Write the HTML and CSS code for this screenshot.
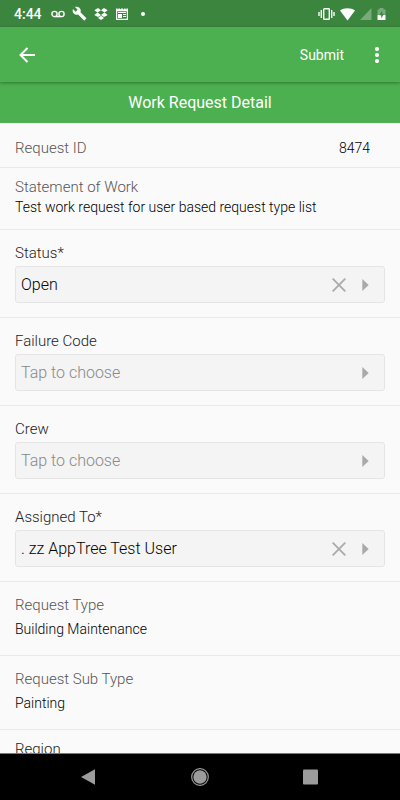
FILE: index.html
```html
<!DOCTYPE html>
<html lang="en">
<head>
<meta charset="utf-8">
<meta name="viewport" content="width=device-width, initial-scale=1">
<title>Work Request Detail</title>
<link rel="stylesheet" href="styles.css">
</head>
<body>
<div class="status-bar">
  <span class="clock">4:44</span>
  <div class="notices">
    <svg width="14" height="14" viewBox="0 0 14 14" fill="none" stroke="#fff" stroke-width="1.4"><circle cx="3.5" cy="7" r="2.6"/><circle cx="10.5" cy="7" r="2.6"/><path d="M3.5 9.6h7"/></svg>
    <svg width="15" height="15" viewBox="0 0 24 24" fill="#fff"><path d="M22.7 19l-9.1-9.1c.9-2.3.4-5-1.5-6.9-2-2-5-2.4-7.4-1.3L9 6 6 9 1.6 4.7C.4 7.1.9 10.1 2.9 12.1c1.9 1.9 4.6 2.4 6.9 1.5l9.1 9.1c.4.4 1 .4 1.400 0l2.300-2.300c.5-.4.5-1.100.1-1.400z"/></svg>
    <svg width="14" height="14" viewBox="0 0 14 14" fill="#fff"><path d="M4 1 7 3.300 3.500 5.600.3 3.200zM10 1l3.700 2.200-3.200 2.400L7 3.300zM.3 7.900l3.200-2.300L7 7.900l-3 2.200zM10.500 5.600l3.200 2.300L10 10.100 7 7.900zM4 10.900 7 8.700l3 2.200-3 2.200z"/></svg>
    <svg width="14" height="14" viewBox="0 0 14 14"><path fill="#fff" fill-rule="evenodd" d="M1 1.500H13V13H1zM2.200 4.200v7.600h9.600V4.200z"/><path fill="#3b853e" d="M2.500 1h1v1.200h-1zM5 1h1v1.200H5zM8 1h1v1.200H8zM10.500 1h1v1.200h-1z"/><path fill="#fff" d="M3 5h8v1H3zM3 7h4v4H3zM8 7h3v1H8zM8 9h3v1H8z"/></svg>
    <svg width="14" height="14" viewBox="0 0 14 14" fill="#fff"><circle cx="7" cy="7" r="2"/></svg>
  </div>
  <div class="signals">
    <svg width="17" height="14" viewBox="0 0 17 14" fill="none" stroke="#fff" stroke-width="1.4"><rect x="5.7" y="1.7" width="5.6" height="10.6" rx=".6"/><path d="M3.300 3v8M1 5v4M13.700 3v8M16 5v4"/></svg>
    <svg width="15" height="14" viewBox="0 0 15 14" fill="#fff"><path d="M7.500 13.500 0 3.400C4 .5 11 .5 15 3.400z"/></svg>
    <svg width="12" height="14" viewBox="0 0 12 14" fill="#79aa7b"><path d="M11.500 1v12H0z"/></svg>
    <svg width="9" height="14" viewBox="0 0 9 14"><path fill="#79aa7b" d="M.5 2.500h2V1h4v1.500h2V8h-8z"/><path fill="#fff" d="M.5 8h8v5h-8z"/><path fill="#3b853e" d="M5.200 3.500 2.300 8.300h1.900v3.200l2.800-4.800H5.200z"/></svg>
  </div>
</div>
<header class="app-bar">
  <button class="icon-button" type="button" aria-label="Back"><svg width="16" height="16" viewBox="0 0 16 16" fill="none" stroke="#fff" stroke-width="2"><path d="M16 8H2M8.500 1 1.500 8l7 7"/></svg></button>
  <button class="submit" type="button">Submit</button>
  <button class="icon-button" type="button" aria-label="More options"><svg width="6" height="16" viewBox="0 0 6 16" fill="#fff"><circle cx="3" cy="2" r="2.1"/><circle cx="3" cy="8" r="2.1"/><circle cx="3" cy="14" r="2.1"/></svg></button>
</header>
<h1 class="title">Work Request Detail</h1>
<main class="form">
  <section class="row inline">
    <h2 class="label">Request ID</h2>
    <p class="value">8474</p>
  </section>
  <section class="row compact">
    <h2 class="label">Statement of Work</h2>
    <p class="value">Test work request for user based request type list</p>
  </section>
  <section class="row picker">
    <h2 class="label dark" id="status">Status*</h2>
    <div class="field">
      <button class="choice" type="button" aria-describedby="status">Open</button>
      <button class="clear" type="button" aria-label="Clear status"><svg width="14" height="14" viewBox="0 0 14 14" stroke="#aaa" stroke-width="1.8"><path d="M.7.7l12.600 12.600M13.300.7.7 13.300"/></svg></button>
      <svg class="arrow" width="7" height="12" viewBox="0 0 7 12" fill="#aaa"><path d="M.3 0 6.700 6 .3 12z"/></svg>
    </div>
  </section>
  <section class="row picker">
    <h2 class="label dark" id="failure">Failure Code</h2>
    <div class="field">
      <button class="choice empty" type="button" aria-describedby="failure">Tap to choose</button>
      <svg class="arrow" width="7" height="12" viewBox="0 0 7 12" fill="#aaa"><path d="M.3 0 6.700 6 .3 12z"/></svg>
    </div>
  </section>
  <section class="row picker">
    <h2 class="label dark" id="crew">Crew</h2>
    <div class="field">
      <button class="choice empty" type="button" aria-describedby="crew">Tap to choose</button>
      <svg class="arrow" width="7" height="12" viewBox="0 0 7 12" fill="#aaa"><path d="M.3 0 6.700 6 .3 12z"/></svg>
    </div>
  </section>
  <section class="row picker">
    <h2 class="label dark" id="assigned">Assigned To*</h2>
    <div class="field">
      <button class="choice" type="button" aria-describedby="assigned">. zz AppTree Test User</button>
      <button class="clear" type="button" aria-label="Clear assignee"><svg width="14" height="14" viewBox="0 0 14 14" stroke="#aaa" stroke-width="1.8"><path d="M.7.7l12.600 12.600M13.300.7.7 13.300"/></svg></button>
      <svg class="arrow" width="7" height="12" viewBox="0 0 7 12" fill="#aaa"><path d="M.3 0 6.700 6 .3 12z"/></svg>
    </div>
  </section>
  <section class="row">
    <h2 class="label">Request Type</h2>
    <p class="value">Building Maintenance</p>
  </section>
  <section class="row">
    <h2 class="label">Request Sub Type</h2>
    <p class="value">Painting</p>
  </section>
  <section class="row compact">
    <h2 class="label dark">Region</h2>
  </section>
</main>
<nav class="nav-bar">
  <button type="button" aria-label="Back"><svg width="18" height="18" viewBox="0 0 18 18" fill="#9c9c9c"><path d="M15 1.200v15.600L1 9z"/></svg></button>
  <button type="button" aria-label="Home"><svg width="18" height="18" viewBox="0 0 18 18"><circle cx="9" cy="9" r="8.3" fill="none" stroke="#9c9c9c" stroke-width="1.2"/><circle cx="9" cy="9" r="6.7" fill="#9c9c9c"/></svg></button>
  <button type="button" aria-label="Recent apps"><svg width="18" height="18" viewBox="0 0 18 18" fill="#9c9c9c"><rect x="1" y="1.500" width="15" height="15" rx="1"/></svg></button>
</nav>
</body>
</html>
```
FILE: styles.css
```css
* {
  box-sizing: border-box;
}

body {
  display: flex;
  flex-direction: column;
  height: 100vh;
  margin: 0;
  background: #fafafa;
  color: #000;
  font-family: Roboto, "Liberation Sans", sans-serif;
  font-size: 14px;
}

h1,
h2,
p {
  margin: 0;
  font-weight: 400;
}

button {
  padding: 0;
  border: 0;
  background: none;
  color: inherit;
  font: inherit;
}

svg {
  display: block;
}

.status-bar {
  display: flex;
  flex: none;
  align-items: center;
  height: 27px;
  padding: 0 14px;
  background: #3b853e;
  color: #fff;
}

.clock {
  font-weight: 500;
}

.notices {
  display: flex;
  align-items: center;
  gap: 7px;
  margin-left: 9px;
}

.signals {
  display: flex;
  align-items: center;
  gap: 5px;
  margin-left: auto;
}

.app-bar {
  display: flex;
  flex: none;
  align-items: center;
  height: 55px;
  padding: 0 8px 0 12px;
  background: #4caf50;
  color: #fff;
  box-shadow: 0 1px 3px rgba(0, 0, 0, 0.35);
  z-index: 1;
}

.icon-button {
  display: flex;
  align-items: center;
  justify-content: center;
  width: 30px;
  height: 40px;
}

.submit {
  height: 40px;
  margin: 0 18px 0 auto;
}

.title {
  flex: none;
  background: #4caf50;
  color: #fff;
  font-size: 16px;
  line-height: 41px;
  text-align: center;
}

.form {
  flex: 1;
  min-height: 0;
  overflow: hidden;
}

.row {
  display: flex;
  flex-direction: column;
  gap: 4px;
  padding: 13px 15px 16px;
  border-bottom: 1px solid #e9e9e9;
}

.compact {
  gap: 0;
  padding: 9px 15px 12px;
}

.inline {
  flex-direction: row;
  align-items: center;
  justify-content: space-between;
  padding: 15px 30px 9px 15px;
}

.picker {
  gap: 3px;
  padding-bottom: 14px;
}

.label {
  color: #555;
  font-size: 15px;
  font-weight: 300;
  line-height: 20px;
}

.dark {
  color: #222;
}

.value {
  font-weight: 300;
  line-height: 20px;
}

.field {
  display: flex;
  align-items: center;
  height: 37px;
  padding: 0 15px 0 5px;
  border: 1px solid #e4e4e4;
  border-radius: 3px;
  background: #f4f4f4;
}

.choice {
  flex: 1;
  height: 35px;
  font-size: 16px;
  font-weight: 300;
  text-align: left;
}

.empty {
  color: #888;
}

.clear {
  padding: 8px;
}

.arrow {
  margin-left: 8px;
}

.nav-bar {
  display: flex;
  flex: none;
  justify-content: center;
  height: 47px;
  border-top: 1px solid #777;
  background: #000;
}

.nav-bar button {
  display: flex;
  align-items: center;
  justify-content: center;
  width: 111px;
}
```
